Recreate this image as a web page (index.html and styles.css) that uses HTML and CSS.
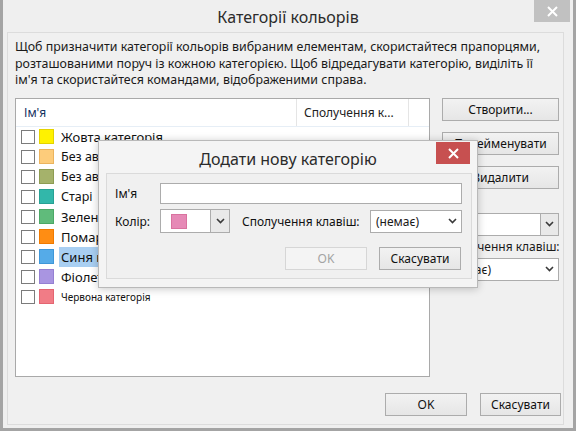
FILE: index.html
```html
<!DOCTYPE html>
<html lang="uk">
<head>
<meta charset="utf-8">
<title>Категорії кольорів</title>
<link rel="stylesheet" href="styles.css">
</head>
<body>
<div class="window">
  <div class="titlebar">
    <span></span>
    <h1 class="title">Категорії кольорів</h1>
    <div class="tb-right">
      <span class="close-btn close-gray"><svg width="11" height="11" viewBox="0 0 11 11"><path d="M1 1L10 10M10 1L1 10" stroke="#fff" stroke-width="2"/></svg></span>
    </div>
  </div>
  <div class="panel">
    <p class="desc">Щоб призначити категорії кольорів вибраним елементам, скористайтеся прапорцями,<br>розташованими поруч із кожною категорією. Щоб відредагувати категорію, виділіть її<br>ім'я та скористайтеся командами, відображеними справа.</p>
    <div class="main">
      <div class="list">
        <div class="list-head">
          <div class="col col-name">Ім'я</div>
          <div class="col col-key">Сполучення к...</div>
          <div class="col col-rest"></div>
        </div>
        <ul class="rows">
          <li class="row"><span class="chk"></span><span class="sw sw-yellow"></span><span class="lbl lbl-l">Жовта категорія</span></li>
          <li class="row"><span class="chk"></span><span class="sw sw-peach"></span><span class="lbl lbl-m">Без автоматичного імені 1</span></li>
          <li class="row"><span class="chk"></span><span class="sw sw-olive"></span><span class="lbl lbl-m">Без автоматичного імені 2</span></li>
          <li class="row"><span class="chk"></span><span class="sw sw-teal"></span><span class="lbl lbl-m">Старі</span></li>
          <li class="row"><span class="chk"></span><span class="sw sw-green"></span><span class="lbl lbl-l">Зелена категорія</span></li>
          <li class="row"><span class="chk"></span><span class="sw sw-orange"></span><span class="lbl lbl-l">Помаранчева категорія</span></li>
          <li class="row"><span class="chk"></span><span class="sw sw-blue"></span><span class="lbl lbl-l lbl-sel">Синя категорія</span></li>
          <li class="row"><span class="chk"></span><span class="sw sw-purple"></span><span class="lbl lbl-l">Фіолетова категорія</span></li>
          <li class="row"><span class="chk"></span><span class="sw sw-red"></span><span class="lbl lbl-s">Червона категорія</span></li>
        </ul>
      </div>
      <div class="side">
        <button class="btn side-btn">Створити...</button>
        <button class="btn side-btn">Перейменувати</button>
        <button class="btn side-btn">Видалити</button>
        <div class="side-label side-label-top">Колір:</div>
        <div class="combo combo-seg">
          <span class="combo-val"></span>
          <span class="combo-arrow seg"><svg width="9" height="6" viewBox="0 0 9 6"><path d="M1 1L4.5 4.5L8 1" fill="none" stroke="#3a3a3a" stroke-width="1.6"/></svg></span>
        </div>
        <div class="side-label">Сполучення клавіш:</div>
        <div class="combo">
          <span class="combo-val">(немає)</span>
          <span class="combo-arrow"><svg width="9" height="6" viewBox="0 0 9 6"><path d="M1 1L4.5 4.5L8 1" fill="none" stroke="#3a3a3a" stroke-width="1.6"/></svg></span>
        </div>
      </div>
    </div>
    <div class="footer">
      <button class="btn foot-ok">OK</button>
      <button class="btn foot-cancel">Скасувати</button>
    </div>
  </div>
</div>

<div class="dialog">
  <div class="dlg-titlebar">
    <span></span>
    <h2 class="dlg-title">Додати нову категорію</h2>
    <div class="tb-right">
      <span class="close-btn close-red"><svg width="11" height="11" viewBox="0 0 11 11"><path d="M1 1L10 10M10 1L1 10" stroke="#fff" stroke-width="2"/></svg></span>
    </div>
  </div>
  <div class="dlg-panel">
    <div class="dlg-grid">
      <label class="dlg-label">Ім'я</label>
      <div class="input dlg-name"></div>
      <label class="dlg-label">Колір:</label>
      <div class="combo combo-seg dlg-color">
        <span class="combo-val"><span class="sw sw-pink"></span></span>
        <span class="combo-arrow seg"><svg width="9" height="6" viewBox="0 0 9 6"><path d="M1 1L4.5 4.5L8 1" fill="none" stroke="#3a3a3a" stroke-width="1.6"/></svg></span>
      </div>
      <label class="dlg-label dlg-keylabel">Сполучення клавіш:</label>
      <div class="combo dlg-keys">
        <span class="combo-val">(немає)</span>
        <span class="combo-arrow"><svg width="9" height="6" viewBox="0 0 9 6"><path d="M1 1L4.5 4.5L8 1" fill="none" stroke="#3a3a3a" stroke-width="1.6"/></svg></span>
      </div>
    </div>
    <div class="dlg-buttons">
      <button class="btn dlg-btn" disabled>OK</button>
      <button class="btn dlg-btn">Скасувати</button>
    </div>
  </div>
</div>
</body>
</html>
```

FILE: styles.css
```css
* { box-sizing: border-box; }
html, body { margin: 0; padding: 0; }
body {
  width: 576px;
  height: 431px;
  overflow: hidden;
  position: relative;
  font-family: "Noto Sans", "Open Sans", sans-serif;
  font-size: 12px;
  color: #1a1a1a;
  background: #f0f0f0;
}
.window {
  width: 576px;
  height: 431px;
  border: 3px solid #a4a4a4;
  border-top: 0;
  background: #efefef;
  display: flex;
  flex-direction: column;
}
.titlebar {
  height: 32px;
  display: grid;
  grid-template-columns: 1fr auto 1fr;
  align-items: start;
}
.title {
  margin: 0;
  font-weight: normal;
  font-size: 16px;
  line-height: 20px;
  padding-top: 7px;
  color: #2b2b2b;
}
.tb-right { display: flex; justify-content: flex-end; }
.close-btn {
  display: flex;
  align-items: center;
  justify-content: center;
}
.close-gray {
  width: 36px;
  height: 22px;
  background: #c1c1c1;
  margin-right: 3px;
}
.panel {
  margin: 0 9px 3px 4px;
  flex: 1;
  border: 1px solid #dcdcdc;
  background: #f0f0f0;
  padding: 6px 3px 0 7px;
}
.desc {
  margin: 0 0 9px 0;
  line-height: 16.5px;
  font-size: 12.4px;
  color: #1a1a1a;
  white-space: nowrap;
}
.main {
  display: flex;
  gap: 12px;
  height: 279px;
}
.list {
  width: 415px;
  border: 1px solid #a9a9a9;
  background: #fff;
}
.list-head {
  display: flex;
  height: 28px;
  border-bottom: 1px solid #e6eef6;
}
.col {
  display: flex;
  align-items: center;
  font-size: 12px;
}
.col-name { width: 281px; padding-left: 8px; border-right: 1px solid #e5e5e5; color: #14315e; }
.col-key { width: 112px; padding-left: 7px; border-right: 1px solid #e5e5e5; color: #222; }
.col-rest { flex: 1; }
.rows { list-style: none; margin: 0; padding: 0; }
.row {
  height: 20px;
  display: flex;
  align-items: center;
  padding-left: 5px;
}
.chk {
  width: 14px;
  height: 14px;
  border: 1px solid #7b7b7b;
  background: #fff;
  flex: none;
}
.sw {
  width: 15px;
  height: 15px;
  margin-left: 4px;
  flex: none;
  border: 1px solid rgba(0,0,0,0.12);
}
.sw-yellow { background: #fff200; border-color: #e4d300; }
.sw-peach { background: #fdcc7b; border-color: #ebb45e; }
.sw-olive { background: #a5b26b; border-color: #8e9c52; }
.sw-teal { background: #32b7aa; border-color: #27a194; }
.sw-green { background: #60bb7b; border-color: #4ca866; }
.sw-orange { background: #ff8d13; border-color: #f07a00; }
.sw-blue { background: #55abe8; border-color: #3f97d8; }
.sw-purple { background: #a995e1; border-color: #9580d2; }
.sw-red { background: #f17c86; border-color: #e46571; }
.sw-pink { background: #e68ab6; border-color: #d9739f; margin-left: 0; width: 16px; }
.lbl { margin-left: 5px; padding: 0 2px; white-space: nowrap; line-height: 20px; color: #111; }
.lbl-l { font-size: 13px; }
.lbl-m { font-size: 12.5px; }
.lbl-s { font-size: 10px; }
.lbl-sel { background: #a9cff2; }

.side {
  width: 117px;
  display: flex;
  flex-direction: column;
}
.btn {
  font-family: inherit;
  font-size: 12px;
  color: #111;
  background: linear-gradient(#f2f2f2, #e6e6e6);
  border: 1px solid #acacac;
  border-radius: 0;
  padding: 0;
  height: 23px;
  display: flex;
  align-items: center;
  justify-content: center;
}
.side-btn { width: 117px; margin-bottom: 11px; }
.side-btn:nth-child(3) { margin-bottom: 0; }
.side-label {
  height: 22px;
  line-height: 22px;
  font-size: 12px;
  white-space: nowrap;
  text-align: right;
}
.side-label-top { height: 24px; text-align: left; }
.combo {
  height: 23px;
  display: flex;
  border: 1px solid #acacac;
  background: #fff;
  align-items: stretch;
}
.combo-val {
  flex: 1;
  display: flex;
  align-items: center;
  padding-left: 5px;
  font-size: 12px;
}
.combo-arrow {
  width: 18px;
  display: flex;
  align-items: center;
  justify-content: center;
}
.combo-arrow.seg {
  background: #e9e9e9;
  border-left: 1px solid #acacac;
}
.footer {
  display: flex;
  justify-content: flex-end;
  gap: 13px;
  margin-top: 16px;
}
.foot-ok { width: 82px; }
.foot-cancel { width: 81px; margin-right: -1px; }

/* dialog */
.dialog {
  position: absolute;
  left: 98px;
  top: 140px;
  width: 380px;
  height: 148px;
  background: #f4f4f4;
  border: 1px solid #b9b9b9;
  box-shadow: 0 1px 8px rgba(0,0,0,0.22);
  display: flex;
  flex-direction: column;
}
.dlg-titlebar {
  height: 32px;
  display: grid;
  grid-template-columns: 1fr auto 1fr;
  align-items: start;
}
.dlg-title {
  margin: 0;
  font-weight: normal;
  font-size: 16px;
  line-height: 22px;
  padding-top: 7px;
  color: #2b2b2b;
  white-space: nowrap;
}
.close-red {
  width: 34px;
  height: 22px;
  background: #c75050;
  margin-top: 1px;
  margin-right: 7px;
}
.dlg-panel {
  margin: 0 5px 0 7px;
  height: 106px;
  border: 1px solid #dadada;
  background: #f0f0f0;
  padding: 9px 9px 0 8px;
}
.dlg-grid {
  display: grid;
  grid-template-columns: 45px 70px 140px 92px;
  grid-template-rows: 21px 24px;
  row-gap: 5px;
  align-items: center;
}
.dlg-label { font-size: 12px; color: #111; }
.input {
  height: 21px;
  border: 1px solid #acacac;
  background: #fff;
}
.dlg-name { grid-column: 2 / 5; }
.dlg-color { height: 24px; padding: 0; }
.dlg-color .combo-val { padding-left: 10px; }
.dlg-color .combo-arrow { width: 19px; }
.dlg-keylabel { padding-left: 12px; white-space: nowrap; }
.dlg-keys { height: 23px; }
.dlg-buttons {
  display: flex;
  justify-content: flex-end;
  gap: 12px;
  margin-top: 14px;
  padding-right: 1px;
}
.dlg-btn { width: 82px; }
.dlg-btn:disabled {
  color: #a3a3a3;
  background: #f4f4f4;
  border-color: #d6d6d6;
}
```
